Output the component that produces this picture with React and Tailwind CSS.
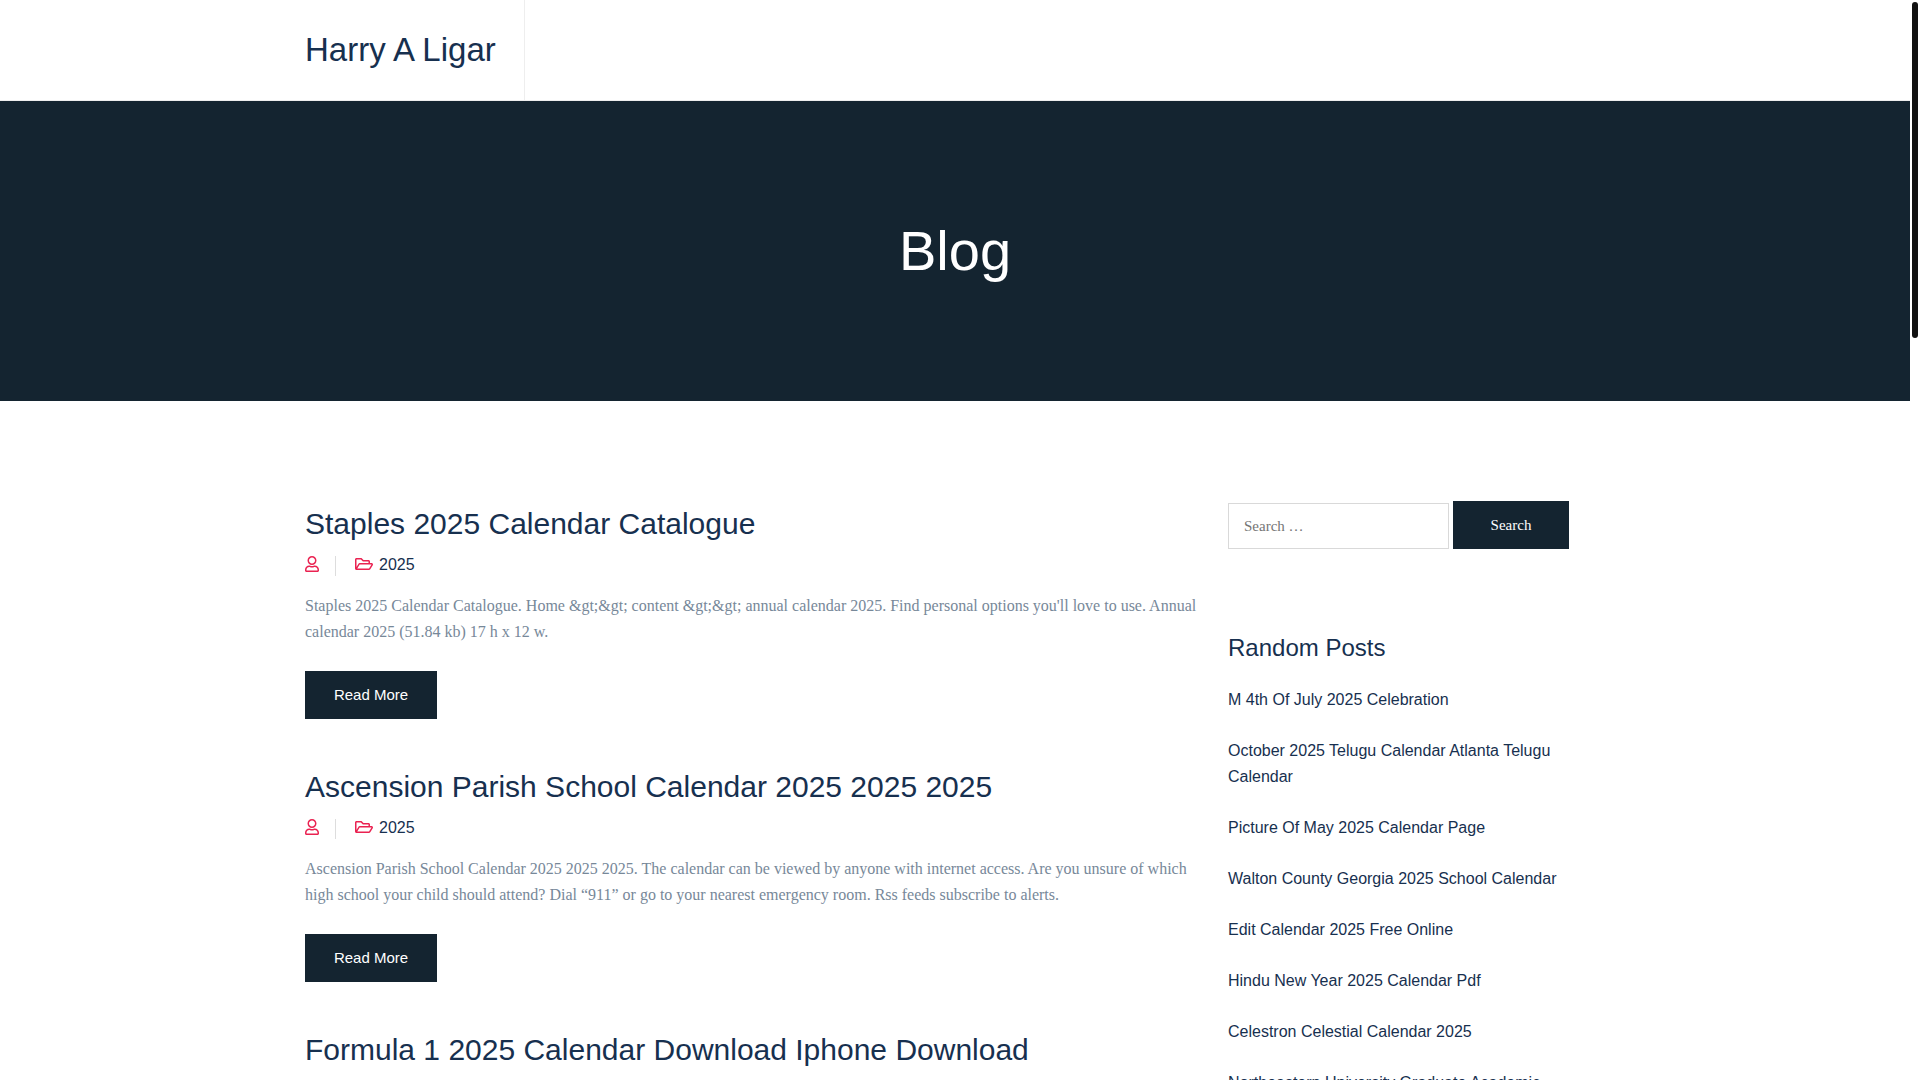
import { useState } from "react";
import { FaRegFolderOpen, FaRegUser } from "react-icons/fa";

const POSTS = [
  {
    title: "Staples 2025 Calendar Catalogue",
    category: "2025",
    excerpt:
      "Staples 2025 Calendar Catalogue. Home &gt;&gt; content &gt;&gt; annual calendar 2025. Find personal options you'll love to use. Annual calendar 2025 (51.84 kb) 17 h x 12 w.",
  },
  {
    title: "Ascension Parish School Calendar 2025 2025 2025",
    category: "2025",
    excerpt:
      "Ascension Parish School Calendar 2025 2025 2025. The calendar can be viewed by anyone with internet access. Are you unsure of which high school your child should attend? Dial “911” or go to your nearest emergency room. Rss feeds subscribe to alerts.",
  },
  {
    title: "Formula 1 2025 Calendar Download Iphone Download",
    category: "2025",
    excerpt: "Formula 1 2025 Calendar Download Iphone Download.",
  },
];

const RANDOM_POSTS = [
  "M 4th Of July 2025 Celebration",
  "October 2025 Telugu Calendar Atlanta Telugu Calendar",
  "Picture Of May 2025 Calendar Page",
  "Walton County Georgia 2025 School Calendar",
  "Edit Calendar 2025 Free Online",
  "Hindu New Year 2025 Calendar Pdf",
  "Celestron Celestial Calendar 2025",
  "Northeastern University Graduate Academic Calendar 2025",
];

function Header() {
  return (
    <header className="border-b border-[#eeeeee] bg-white">
      <div className="mx-auto flex h-[100px] max-w-[1300px]">
        <div className="flex items-center border-r border-[#eeeeee] pr-7">
          <a href="#" className="text-[33px] leading-[38px]">
            Harry A Ligar
          </a>
        </div>
      </div>
    </header>
  );
}

function Post({ title, category, excerpt }) {
  return (
    <article>
      <h2 className="text-[30px] leading-[46px]">
        <a href="#">{title}</a>
      </h2>
      <div className="mt-[5px] flex items-start text-base leading-[26px]">
        <FaRegUser className="mt-1 h-4 w-[14px] text-[#ea2251]" />
        <span className="mt-1 ml-4 h-5 w-px bg-[#dddddd]" />
        <FaRegFolderOpen className="mt-1 ml-[19px] h-4 w-[18px] text-[#ea2251]" />
        <a href="#" className="ml-[6px]">
          {category}
        </a>
      </div>
      <p className="mt-[15px] font-['Liberation_Serif',serif] text-base leading-[26px] text-[#778899]">
        {excerpt}
      </p>
      <a
        href="#"
        className="mt-[26px] inline-block w-[132px] bg-[#142430] text-center text-[15px] leading-[48px] text-white"
      >
        Read More
      </a>
    </article>
  );
}

function SearchForm() {
  const [query, setQuery] = useState("");

  return (
    <form
      onSubmit={(e) => e.preventDefault()}
      className="flex items-end gap-1 font-['Liberation_Serif',serif] text-[15px]"
    >
      <input
        type="search"
        aria-label="Search for:"
        value={query}
        onChange={(e) => setQuery(e.target.value)}
        placeholder="Search …"
        className="h-[46px] w-[221px] border border-[#d9d9d9] px-[15px] placeholder:text-[#757575] focus:outline-none"
      />
      <button type="submit" className="h-12 w-[116px] bg-[#142430] text-white">
        Search
      </button>
    </form>
  );
}

export default function App() {
  return (
    <div className="relative h-screen overflow-hidden bg-white font-['Liberation_Sans',Arial,sans-serif] text-[#17304f]">
      <div className="h-full overflow-y-auto pr-[10px] [scrollbar-width:none]">
        <Header />

        {/* Page banner */}
        <section className="flex h-[300px] items-center justify-center bg-[#142430]">
          <h1 className="text-[56px] leading-[66px] text-white">Blog</h1>
        </section>

        <div className="mx-auto flex max-w-[1300px] gap-6 py-[100px]">
          <main className="flex flex-1 flex-col gap-[45px]">
            {POSTS.map((post) => (
              <Post key={post.title} {...post} />
            ))}
          </main>

          <aside className="w-[377px] shrink-0">
            <SearchForm />
            <h3 className="mt-[86px] text-2xl leading-[26px]">Random Posts</h3>
            <ul className="mt-[26px] space-y-[25px] text-base leading-[26px]">
              {RANDOM_POSTS.map((title) => (
                <li key={title}>
                  <a href="#">{title}</a>
                </li>
              ))}
            </ul>
          </aside>
        </div>
      </div>

      {/* Scroll thumb */}
      <div className="absolute top-[2px] right-[2px] h-[336px] w-[6px] rounded-full bg-[#111111]" />
    </div>
  );
}
